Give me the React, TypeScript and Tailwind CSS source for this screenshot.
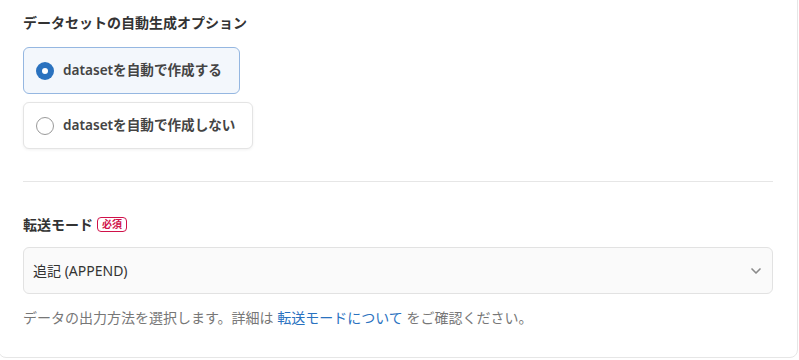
import { ChevronDown } from 'lucide-react'

const font = { fontFamily: '"Noto Sans", "Noto Sans CJK JP", sans-serif' }

function Radio({ checked }: { checked: boolean }) {
  return checked ? (
    <span className="flex h-[18px] w-[18px] items-center justify-center rounded-full bg-[#2a72bf]">
      <span className="h-[6px] w-[6px] rounded-full bg-white" />
    </span>
  ) : (
    <span className="h-[18px] w-[18px] rounded-full border border-[#9a9a9a] bg-white" />
  )
}

function Option({ label, checked }: { label: string; checked: boolean }) {
  return (
    <div
      className={`flex h-[47px] items-center gap-[9px] rounded-md border pl-[12px] pr-[17px] ${
        checked
          ? 'border-[#95b7e1] bg-[#f3f7fc]'
          : 'border-[#e4e4e4] bg-white shadow-[0_1px_3px_rgba(0,0,0,0.06)]'
      }`}
    >
      <Radio checked={checked} />
      <span className="text-[13.6px] font-semibold text-[#444]">{label}</span>
    </div>
  )
}

export default function App() {
  return (
    <div className="h-[360px] w-[799px] overflow-hidden bg-white" style={font}>
      <div className="-ml-[2px] -mt-[10px] w-[800px] rounded-lg border border-[#e6e6e6] bg-white px-[24px] pb-[29px] pt-[22px]">
        <div className="text-[14px] font-semibold leading-[20px] text-[#333]">
          データセットの自動生成オプション
        </div>
        <div className="mt-[14px] flex flex-col items-start gap-[8px]">
          <Option label="datasetを自動で作成する" checked />
          <Option label="datasetを自動で作成しない" checked={false} />
        </div>

        <div className="mt-[32px] h-px bg-[#e6e6e6]" />

        <div className="mt-[32px] flex h-[20px] items-center gap-[4px]">
          <span className="text-[14px] font-semibold text-[#333]">転送モード</span>
          <span className="flex h-[15px] items-center rounded-[4px] border border-[#d0124a] px-[4px] text-[10px] font-bold leading-none text-[#d0124a]">
            必須
          </span>
        </div>

        <div className="mt-[13px] flex h-[47px] items-center justify-between rounded-md border border-[#e2e2e2] bg-[#fafafa] pl-[9px] pr-[8px]">
          <span className="text-[14px] text-[#333]">追記 (APPEND)</span>
          <ChevronDown className="h-[16px] w-[16px] text-[#8a8a8a]" strokeWidth={2.5} />
        </div>

        <p className="mt-[14px] text-[14px] leading-[20px] text-[#777]">
          データの出力方法を選択します。詳細は{' '}
          <span className="text-[#2a72bf]">転送モードについて</span> をご確認ください。
        </p>
      </div>
    </div>
  )
}
